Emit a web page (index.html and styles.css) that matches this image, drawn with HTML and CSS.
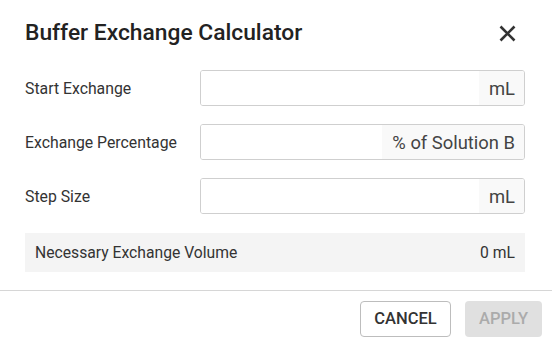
FILE: index.html
```html
<!DOCTYPE html>
<html>
<head>
<meta charset="utf-8">
<link rel="stylesheet" href="styles.css">
</head>
<body>
<div class="dialog">
  <div class="header">
    <h1 class="title">Buffer Exchange Calculator</h1>
    <button class="close" aria-label="Close">
      <svg width="17" height="17" viewBox="0 0 17 17"><path d="M1.5 1.5 L15.5 15.5 M15.5 1.5 L1.5 15.5" stroke="#333" stroke-width="2.6" fill="none"/></svg>
    </button>
  </div>
  <div class="form">
    <label class="label">Start Exchange</label>
    <div class="field"><input class="input" type="text"><span class="addon">mL</span></div>
    <label class="label">Exchange Percentage</label>
    <div class="field"><input class="input" type="text"><span class="addon">% of Solution B</span></div>
    <label class="label">Step Size</label>
    <div class="field"><input class="input" type="text"><span class="addon">mL</span></div>
  </div>
  <div class="result">
    <span>Necessary Exchange Volume</span>
    <span>0 mL</span>
  </div>
  <div class="footer">
    <button class="btn cancel">CANCEL</button>
    <button class="btn apply" disabled>APPLY</button>
  </div>
</div>
</body>
</html>
```
FILE: styles.css
```css
html, body {
  margin: 0;
  padding: 0;
  background: #fff;
  font-family: Roboto, "Liberation Sans", sans-serif;
  color: #333;
}
.dialog {
  width: 552px;
  height: 339px;
  overflow: hidden;
}
.header {
  display: flex;
  justify-content: space-between;
  align-items: center;
  padding: 17px 36px 0 25px;
  height: 32px;
}
.title {
  margin: 0;
  font-size: 22.8px;
  font-weight: 500;
  line-height: 32px;
  color: #222;
}
.close {
  border: 0;
  background: none;
  padding: 0;
  width: 17px;
  height: 17px;
  display: flex;
}
.form {
  margin: 21px 27px 0 25px;
  display: grid;
  grid-template-columns: 175px 1fr;
  row-gap: 18px;
  align-items: center;
}
.label {
  font-size: 15.8px;
  color: #333;
}
.field {
  display: flex;
  height: 36px;
  box-sizing: border-box;
  border: 1px solid #cfcfcf;
  border-radius: 3px;
  overflow: hidden;
}
.input {
  flex: 1;
  min-width: 0;
  border: 0;
  outline: none;
  padding: 0 10px;
  font: inherit;
}
.addon {
  display: flex;
  align-items: center;
  padding: 0 9px 0 10px;
  background: #f9f9f9;
  font-size: 18.4px;
  color: #444;
}
.result {
  margin: 19px 27px 0 25px;
  height: 39px;
  background: #f4f4f4;
  display: flex;
  justify-content: space-between;
  align-items: center;
  padding: 0 10px 1px;
  box-sizing: border-box;
  font-size: 15.7px;
  color: #333;
}
.footer {
  margin-top: 18px;
  border-top: 1px solid #d6d6d6;
  padding: 10px 10px 0;
  display: flex;
  justify-content: flex-end;
  gap: 14px;
}
.btn {
  height: 36px;
  border-radius: 4px;
  font-family: Roboto, "Liberation Sans", sans-serif;
  font-size: 16.5px;
  font-weight: 500;
  padding: 0 0 1px;
}
.cancel {
  width: 91px;
  background: #fff;
  border: 1px solid #bdbdbd;
  color: #333;
}
.apply {
  width: 77px;
  background: #e0e0e0;
  border: 0;
  color: #ababab;
}
```
